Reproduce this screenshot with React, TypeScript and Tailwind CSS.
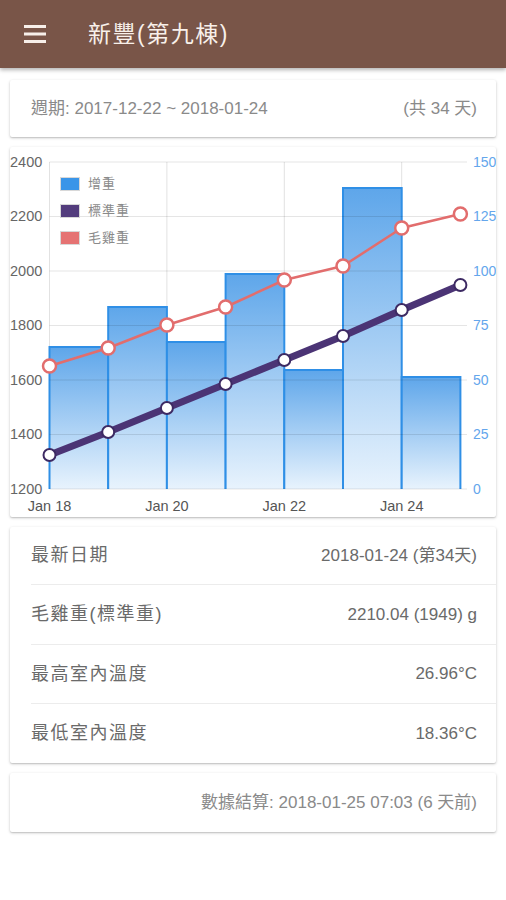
import React from "react";

const XS = [49.5, 108.2, 166.9, 225.6, 284.3, 343, 401.7, 460.4];
const RED = [366, 348, 325, 307, 280, 266, 228, 214];
const PUR = [455, 432, 408, 384, 360, 336, 310, 285];
const BAR_TOPS = [347, 307, 342, 274, 370, 188, 377];
const HY = [162, 216.5, 271, 325.5, 380, 434.5, 489];
const LEFT = ["2400", "2200", "2000", "1800", "1600", "1400", "1200"];
const RIGHT = ["150", "125", "100", "75", "50", "25", "0"];

function Chart() {
  const pts = (ys: number[]) => XS.map((x, i) => `${x},${ys[i]}`).join(" ");
  return (
    <svg width={486} height={370} className="block">
      <defs>
        <linearGradient id="barg" x1="0" y1="0" x2="0" y2="1">
          <stop offset="0" stopColor="#5ea6ea" />
          <stop offset="1" stopColor="#e8f3fd" />
        </linearGradient>
      </defs>
      <g transform="translate(-10,-147)" fontFamily="'Liberation Sans', Arial, sans-serif">
        {[49.5, 166.9, 284.3, 401.7].map((x) => (
          <line key={x} x1={x} x2={x} y1={162} y2={489} stroke="#e2e2e2" strokeWidth={1} />
        ))}
        {BAR_TOPS.map((t, i) => {
          const x1 = XS[i];
          const x2 = XS[i + 1];
          return (
            <g key={i}>
              <rect x={x1} y={t} width={x2 - x1} height={489 - t} fill="url(#barg)" />
              <polyline
                points={`${x1},489 ${x1},${t} ${x2},${t} ${x2},489`}
                fill="none"
                stroke="#2f8fe6"
                strokeWidth={2}
              />
            </g>
          );
        })}
        {HY.map((y) => (
          <line key={y} x1={49.5} x2={467} y1={y} y2={y} stroke="rgba(0,0,0,0.1)" strokeWidth={1} />
        ))}
        {HY.map((y, i) => (
          <text key={"l" + y} x={10} y={y + 1} dominantBaseline="middle" fontSize={14.5} fill="#666">
            {LEFT[i]}
          </text>
        ))}
        {HY.map((y, i) => (
          <text key={"r" + y} x={473} y={y + 1} dominantBaseline="middle" fontSize={14} fill="#64a6ec">
            {RIGHT[i]}
          </text>
        ))}
        {["Jan 18", "Jan 20", "Jan 22", "Jan 24"].map((t, i) => (
          <text key={t} x={[49.5, 166.9, 284.3, 401.7][i]} y={507} textAnchor="middle" dominantBaseline="middle" fontSize={14.5} fill="#555">
            {t}
          </text>
        ))}
        <polyline points={pts(PUR)} fill="none" stroke="#4b3475" strokeWidth={7} strokeLinejoin="round" />
        <polyline points={pts(RED)} fill="none" stroke="#e26d6d" strokeWidth={2.5} strokeLinejoin="round" />
        {XS.map((x, i) => (
          <circle key={"p" + i} cx={x} cy={PUR[i]} r={6} fill="#fff" stroke="#3d2a63" strokeWidth={2} />
        ))}
        {XS.map((x, i) => (
          <circle key={"c" + i} cx={x} cy={RED[i]} r={6.5} fill="#fff" stroke="#e26d6d" strokeWidth={2.5} />
        ))}
        {[
          { c: "#3a95e8", t: "增重", y: 177 },
          { c: "#533d7d", t: "標準重", y: 204 },
          { c: "#e57373", t: "毛雞重", y: 231 },
        ].map((l) => (
          <g key={l.t}>
            <rect x={60.5} y={l.y + 0.5} width={19} height={13} fill={l.c} stroke="#d8d8d8" strokeWidth={1} />
            <text
              x={88}
              y={l.y + 7}
              dominantBaseline="middle"
              fontSize={13}
              fill="#8a8a8a"
              letterSpacing={1}
              fontFamily="'Noto Sans CJK TC', sans-serif"
            >
              {l.t}
            </text>
          </g>
        ))}
      </g>
    </svg>
  );
}

const card = "mx-[10px] bg-white rounded-[2px] shadow-[0_1px_3px_rgba(0,0,0,0.22),0_1px_1px_rgba(0,0,0,0.08)]";

export default function App() {
  return (
    <div className="w-[506px] h-[900px] bg-white font-['Liberation_Sans','Noto_Sans_CJK_TC',sans-serif] overflow-hidden">
      <div className="h-[68px] bg-[#795548] flex items-center shadow-[0_2px_4px_rgba(0,0,0,0.3)] relative z-10">
        <svg width="22" height="18" viewBox="0 0 22 18" className="ml-[24px] shrink-0">
          <rect x="0" y="0" width="22" height="3" fill="#f7efe9" />
          <rect x="0" y="7.5" width="22" height="3" fill="#f7efe9" />
          <rect x="0" y="15" width="22" height="3" fill="#f7efe9" />
        </svg>
        <div className="ml-[42px] text-[23px] text-[#f8f0ea] tracking-[1.5px]">新豐(第九棟)</div>
      </div>

      <div className={`${card} mt-[12px] h-[57px] flex items-center justify-between pl-[21px] pr-[19px] text-[17px] text-[#8a8a8a]`}>
        <span>週期: 2017-12-22 ~ 2018-01-24</span>
        <span>(共 34 天)</span>
      </div>

      <div className={`${card} mt-[10px] h-[370px] overflow-hidden`}>
        <Chart />
      </div>

      <div className={`${card} mt-[10px] flex flex-col`}>
        {[
          { l: "最新日期", v: "2018-01-24 (第34天)", h: "h-[57px]" },
          { l: "毛雞重(標準重)", v: "2210.04 (1949) g", h: "h-[59px]" },
          { l: "最高室內溫度", v: "26.96°C", h: "h-[58px]" },
          { l: "最低室內溫度", v: "18.36°C", h: "h-[59px]" },
        ].map((r, i) => (
          <div key={r.l} className={`ml-[21px] ${i > 0 ? "border-t border-[#ececec]" : ""}`}>
            <div className={`${r.h} flex items-center justify-between pr-[19px]`}>
              <span className="text-[18px] tracking-[1.5px] text-[#6a6a6a]">{r.l}</span>
              <span className="text-[17px] text-[#6a6a6a]">{r.v}</span>
            </div>
          </div>
        ))}
      </div>

      <div className={`${card} mt-[10px] h-[59px] flex items-center justify-end pr-[19px] text-[17px] text-[#8a8a8a]`}>
        <span>數據結算: 2018-01-25 07:03 (6 天前)</span>
      </div>
    </div>
  );
}
